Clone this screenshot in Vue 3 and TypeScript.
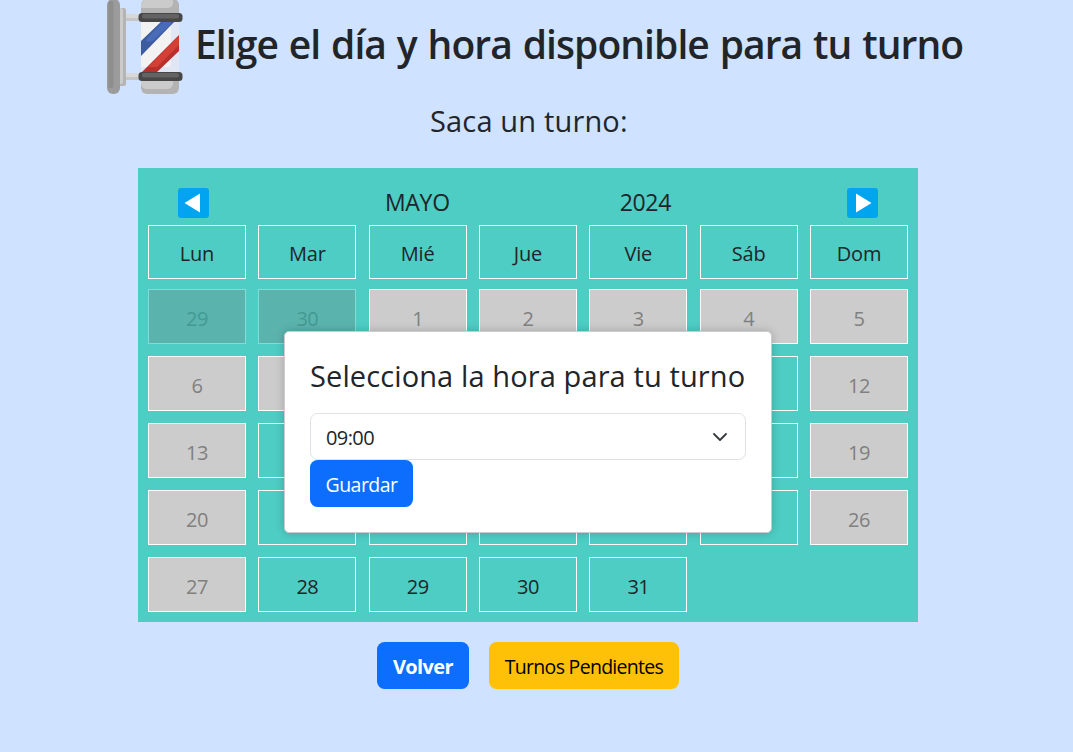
<script setup lang="ts">
import { ref } from 'vue'

interface Day {
  label: number
  state: 'open' | 'off' | 'past'
}

const weekdays: string[] = ['Lun', 'Mar', 'Mié', 'Jue', 'Vie', 'Sáb', 'Dom']
const closed = new Set<number>([1, 2, 3, 4, 5, 6, 7, 12, 13, 19, 20, 26, 27])

const days: Day[] = [
  { label: 29, state: 'past' },
  { label: 30, state: 'past' },
  ...Array.from({ length: 31 }, (_, i): Day => ({
    label: i + 1,
    state: closed.has(i + 1) ? 'off' : 'open',
  })),
]

const hours: string[] = ['09:00', '10:00', '11:00', '12:00', '16:00', '17:00', '18:00']
const hour = ref<string>('09:00')
</script>

<template>
  <main class="page">
    <header class="header">
      <svg class="pole" width="76" height="94" viewBox="0 0 76 94">
        <defs>
          <clipPath id="glass"><rect x="34" y="20" width="38" height="54" /></clipPath>
          <clipPath id="body"><rect x="34" y="-1" width="38" height="95" rx="6" /></clipPath>
        </defs>
        <rect x="11" y="8" width="8" height="78" rx="2" fill="#b4b4b4" />
        <rect x="11" y="8" width="5" height="76" rx="2" fill="#cbcbcb" />
        <rect x="19" y="14" width="14" height="7" fill="#c6c6c6" />
        <rect x="19" y="14" width="14" height="4" fill="#d8d8d8" />
        <rect x="19" y="73" width="14" height="7" fill="#c6c6c6" />
        <rect x="19" y="73" width="14" height="4" fill="#d8d8d8" />
        <rect x="0" y="-1" width="13" height="95" rx="6" fill="#9b9b9b" />
        <rect x="1.5" y="1" width="5" height="87" rx="2.5" fill="#8e8e8e" />
        <g clip-path="url(#body)">
          <rect x="34" y="-1" width="38" height="95" fill="#b3b3b3" />
          <path d="M34 0H66V4Q65 8 60 8H34ZM34 80H66V84Q65 89 60 89H40Q35 89 34 84Z" fill="#cbcbcb" />
        </g>
        <g clip-path="url(#glass)">
          <rect x="34" y="20" width="38" height="54" fill="#e1e6f5" />
          <path d="M34 20H64V63Q64 67 60 67H34Z" fill="#f2f2f2" />
          <path d="M34 41L57 19H70L34 56Z" fill="#3c5c9f" />
          <path d="M39 41Q40 38 43 35L58 20H64V24L47 40Q43 43 39 41Z" fill="#496cb9" />
          <path d="M34 73L72 35V51L48 74H34Z" fill="#b7302c" />
          <path d="M41 67L72 36V45L50 67Z" fill="#d54036" />
        </g>
        <rect x="31.5" y="13" width="44" height="9" rx="3.5" fill="#474747" />
        <rect x="35" y="14" width="37" height="4.5" rx="2" fill="#636363" />
        <rect x="31.5" y="72" width="44" height="9" rx="3.5" fill="#474747" />
        <rect x="35" y="73" width="37" height="4.5" rx="2" fill="#636363" />
      </svg>
      <h1 class="title">Elige el día y hora disponible para tu turno</h1>
    </header>
    <h3 class="subtitle">Saca un turno:</h3>

    <section class="calendar">
      <div class="nav">
        <button class="arrow" aria-label="Anterior">
          <svg width="31" height="30" viewBox="0 0 31 30">
            <rect width="31" height="30" rx="3" fill="#00a4ef" />
            <path d="M22 5.5V24.5L6.5 15Z" fill="#fff" />
          </svg>
        </button>
        <span class="month">MAYO</span>
        <span class="year">2024</span>
        <button class="arrow" aria-label="Siguiente">
          <svg width="31" height="30" viewBox="0 0 31 30">
            <rect width="31" height="30" rx="3" fill="#00a4ef" />
            <path d="M9 5.5V24.5L24.5 15Z" fill="#fff" />
          </svg>
        </button>
      </div>
      <div class="grid weekdays">
        <div v-for="name in weekdays" :key="name" class="cell head">{{ name }}</div>
      </div>
      <div class="grid days">
        <div v-for="(day, i) in days" :key="i" class="cell" :class="day.state">{{ day.label }}</div>
      </div>
    </section>

    <div class="actions">
      <button class="btn primary bold">Volver</button>
      <button class="btn warning">Turnos Pendientes</button>
    </div>

    <div class="modal">
      <h3 class="modal-title">Selecciona la hora para tu turno</h3>
      <div class="field">
        <select v-model="hour" class="select">
          <option v-for="h in hours" :key="h" :value="h">{{ h }}</option>
        </select>
        <svg class="chevron" width="16" height="16" viewBox="0 0 16 16">
          <path d="m2 5 6 6 6-6" fill="none" stroke="#343a40" stroke-width="1.8" stroke-linecap="round" stroke-linejoin="round" />
        </svg>
      </div>
      <button class="btn primary save">Guardar</button>
    </div>
  </main>
</template>

<style>
body {
  background: #cfe2ff;
}
</style>

<style scoped>
.page {
  position: relative;
  width: 1073px;
  height: 752px;
  overflow: hidden;
  background: #cfe2ff;
  color: #212529;
  font-family: 'Open Sans', 'Noto Sans', sans-serif;
  font-size: 20px;
  line-height: 30px;
}
.page * {
  box-sizing: border-box;
}
button,
select {
  font: inherit;
}
.header {
  display: flex;
  height: 94px;
  padding-left: 107px;
}
.pole {
  flex: none;
}
.title {
  margin: 20px 0 0 12px;
  font-size: 39px;
  line-height: 48px;
  font-weight: 600;
  letter-spacing: -0.93px;
  word-spacing: 1.6px;
  white-space: nowrap;
}
.subtitle {
  margin: 9px 0 0;
  padding-left: 430px;
  font-size: 29px;
  line-height: 36px;
  font-weight: 500;
  letter-spacing: 0.16px;
  white-space: nowrap;
}
.calendar {
  width: 780px;
  height: 454px;
  margin: 29px 0 0 138px;
  padding: 20px 10px 10px;
  background: #4ecdc4;
}
.nav {
  display: flex;
  justify-content: space-between;
  height: 37px;
  padding: 0 30px;
  font-size: 23px;
  line-height: 28px;
}
.month {
  margin-left: 6px;
  letter-spacing: -0.3px;
}
.year {
  margin-right: 6px;
  letter-spacing: -0.3px;
}
.arrow {
  width: 31px;
  height: 30px;
  padding: 0;
  border: 0;
  background: none;
}
.arrow svg {
  display: block;
}
.grid {
  display: grid;
  grid-template-columns: repeat(7, 98px);
  justify-content: space-between;
}
.days {
  row-gap: 12px;
  margin-top: 10px;
}
.cell {
  height: 55px;
  padding-top: 14px;
  border: 1px solid #fff;
  text-align: center;
  letter-spacing: -0.5px;
}
.head {
  height: 54px;
  padding-top: 13px;
  letter-spacing: -0.2px;
}
.off,
.past {
  background: #ccc;
  color: #808080;
}
.past {
  border-color: #84dcd6;
  background: #5bb3ad;
  color: #429a94;
}
.actions {
  display: flex;
  gap: 20px;
  margin: 20px 0 0 377px;
}
.btn {
  height: 47px;
  padding: 2px 0 0;
  border: 0;
  border-radius: 7.5px;
  text-align: center;
  white-space: nowrap;
}
.primary {
  width: 92px;
  background: #0d6efd;
  color: #fff;
}
.bold {
  font-weight: 700;
  letter-spacing: -0.6px;
}
.warning {
  width: 190px;
  background: #ffc107;
  color: #000;
  font-size: 19.5px;
  letter-spacing: -0.7px;
}
.modal {
  position: absolute;
  left: 284px;
  top: 331px;
  width: 488px;
  height: 202px;
  padding: 25px;
  border: 1px solid #ccc;
  border-radius: 5px;
  background: #fff;
  box-shadow: 0 0 10px rgba(0, 0, 0, 0.2);
}
.modal-title {
  margin: 1px 0 19px;
  font-size: 29px;
  line-height: 36px;
  font-weight: 500;
  letter-spacing: 0.11px;
  white-space: nowrap;
}
.field {
  display: grid;
  align-items: center;
  height: 47px;
}
.select {
  grid-area: 1 / 1;
  width: 100%;
  height: 47px;
  padding: 2px 15px 0;
  border: 1px solid #dee2e6;
  border-radius: 7.5px;
  background: #fff;
  color: #212529;
  letter-spacing: -0.6px;
  appearance: none;
}
.chevron {
  grid-area: 1 / 1;
  justify-self: end;
  margin-right: 18px;
  pointer-events: none;
}
.save {
  display: block;
  width: 103px;
  font-size: 19.5px;
  letter-spacing: -0.55px;
}
</style>
